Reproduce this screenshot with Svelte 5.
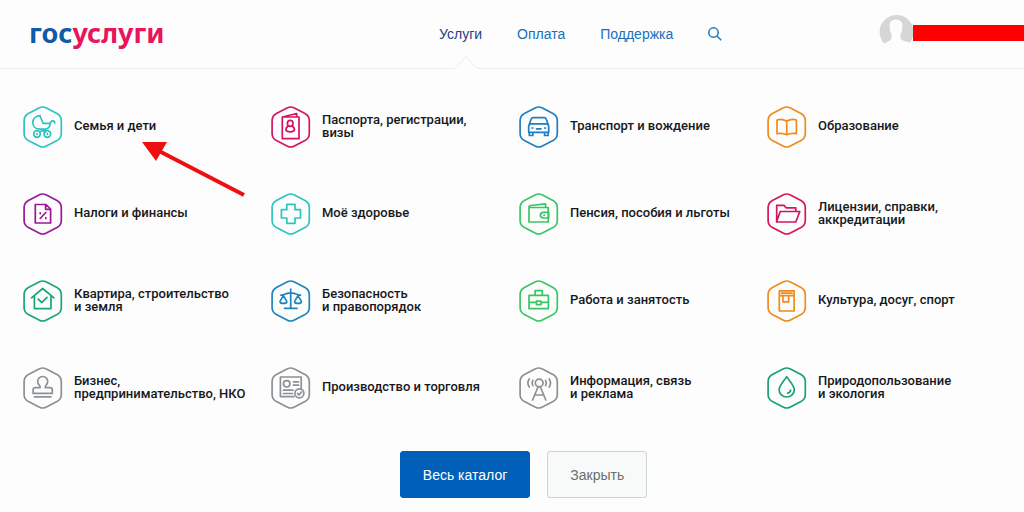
<script lang="ts">
  interface Category {
    title: string;
    icon: string;
    color: string;
  }

  // \u00a0 keeps the short "и" together with the word after it
  const categories: Category[] = [
    { title: 'Семья и дети', icon: 'stroller', color: '#2cc4c0' },
    { title: 'Паспорта, регистрации, визы', icon: 'passport', color: '#d3165c' },
    { title: 'Транспорт и вождение', icon: 'car', color: '#1f7fc0' },
    { title: 'Образование', icon: 'book', color: '#f08a1c' },
    { title: 'Налоги и финансы', icon: 'tax', color: '#9c1796' },
    { title: 'Моё здоровье', icon: 'cross', color: '#2cc4c0' },
    { title: 'Пенсия, пособия и льготы', icon: 'wallet', color: '#38c763' },
    { title: 'Лицензии, справки, аккредитации', icon: 'folder', color: '#d3165c' },
    { title: 'Квартира, строительство и\u00a0земля', icon: 'house', color: '#18a673' },
    { title: 'Безопасность и\u00a0правопорядок', icon: 'scales', color: '#1f84bd' },
    { title: 'Работа и занятость', icon: 'case', color: '#38c763' },
    { title: 'Культура, досуг, спорт', icon: 'notebook', color: '#f08a1c' },
    { title: 'Бизнес, предпринимательство, НКО', icon: 'stamp', color: '#8d9194' },
    { title: 'Производство и торговля', icon: 'certificate', color: '#8d9194' },
    { title: 'Информация, связь и\u00a0реклама', icon: 'antenna', color: '#8d9194' },
    { title: 'Природопользование и\u00a0экология', icon: 'drop', color: '#18a077' }
  ];

  const hexagon =
    'M16.5 1.8Q19.7 .2 22.9 1.8L34 7.4Q38.3 9.8 38.3 14.5V27.5Q38.3 32.2 34 34.6L22.9 40.2Q19.7 41.8 16.5 40.2L5.4 34.6Q1.1 32.2 1.1 27.5V14.5Q1.1 9.8 5.4 7.4Z';

  const icons: Record<string, string> = {
    stroller:
      'M17 9.7C12.5 10 9.8 13 9.8 16.5C9.8 20.5 12.5 23 16 23H23C26 22.4 27 20 27.3 17.5C27.6 15.3 29 14.6 30.3 14.9Q31.8 15.3 31.8 17M17 9.7L20 17.3H27.3M16.5 23L22.5 26M23 23L16.5 26M17.3 28a3.3 3.3 0 1 1-6.6 0a3.3 3.3 0 1 1 6.6 0M27.6 28a3.3 3.3 0 1 1-6.6 0a3.3 3.3 0 1 1 6.6 0M14 27.6v.8M24.3 27.6v.8',
    passport:
      'M11.3 11H28V32.7H11.3ZM11.3 11L25.7 7.5V11M22 17.4a2.8 3 0 1 1-5.6 0a2.8 3 0 1 1 5.6 0M17.2 20.3C15.5 21 14.8 22.5 15 24.5Q19.2 27.3 23.4 24.5C23.6 22.5 22.9 21 21.2 20.3',
    car: 'M10.4 18L12 13.5Q12.6 11.7 14.5 11.7H25Q26.8 11.7 27.4 13.5L29 18M9.7 20.5Q9.7 17.8 12 17.8H27.4Q29.7 17.8 29.7 20.5V26.3H9.7ZM10.3 26.3V29.5H13.8V26.3M25.6 26.3V29.5H29.1V26.3M13 22H13.8M25.6 22H26.4M17.5 22.8H22',
    book: 'M19.7 15.2Q15 12.5 10 14V27.7Q15 26.5 19.7 28.7Q24.4 26.5 29.4 27.7V14Q24.4 12.5 19.7 15.2ZM19.7 15.2V28.7',
    tax: 'M12.3 11.5H23L27.6 16V30H12.3ZM22.6 11.7V16.3H27.4M22.8 19.5L17.2 25.5M17.2 19.8v.8M22.8 24.6v.8',
    cross: 'M15.8 11.3H24V16.7H29.5V25H24V30.3H15.8V25H10.4V16.7H15.8Z',
    wallet:
      'M10 14.5H29.2V29H10ZM10 14.3Q9.8 12.8 11.5 12.5L26.6 10.9V14.3M29.7 19.3H24.5Q21.4 19.3 21.4 22.1Q21.4 25 24.5 25H29.7ZM25 22.1h.4',
    folder:
      'M9.7 28.5V12.4H17L19 14.8H28.8V18.3M9.5 29L13.2 18.5H32.8L28.8 29Z',
    house:
      'M8.5 17.8L19.7 8.5L31 17.8M11.4 16V28.6H28V16M15.3 19.2L18.7 22.6L24 17.4',
    scales:
      'M19.7 9.2V28.2M13.5 28.3H26M10 15.2Q12.5 15.2 15.5 13.6Q19.7 12 23.9 13.6Q26.9 15.2 29.4 15.2M12.4 15.6L9 21.4Q9 23.4 12.4 23.4Q15.8 23.4 15.8 21.4ZM27 15.6L23.6 21.4Q23.6 23.4 27 23.4Q30.4 23.4 30.4 21.4Z',
    case: 'M10 15.3H29.4V28.6H10ZM16.1 15.2V10.6H23.3V15.2M10 22.4H17.4M22 22.4H29.4M17.4 21.2H22V24.6H17.4Z',
    notebook:
      'M12.3 10.8H27.1V31H12.3ZM12.3 15.7H27.1M14.5 13.2H25M15.9 15.7V21.8H21.7V15.7',
    stamp:
      'M17.2 20.7C17.6 18.5 14.7 17.7 14.7 14.5A5 5 0 0 1 24.7 14.5C24.7 17.7 21.8 18.5 22.2 20.7H27Q29.3 20.7 29.3 23V26.4H10.1V23Q10.1 20.7 12.4 20.7ZM11.5 29.8H28',
    certificate:
      'M23 29.6H9.4V10H30.2V21M18.9 16.8a3.2 3.2 0 1 1-6.4 0a3.2 3.2 0 1 1 6.4 0M22.5 14.8H27.5M22.5 18.2H27.5M12.5 23.2H22M12.5 26.5H21.5M32.9 26.3a4.5 4.5 0 1 1-9 0a4.5 4.5 0 1 1 9 0M26.5 26.3L28 27.8L30.6 25',
    antenna:
      'M24.1 16a3.9 3.9 0 1 1-7.8 0a3.9 3.9 0 1 1 7.8 0M13.6 33L19 20H21.4L26.8 33M15.7 28H24.7M13.8 13.3Q12.3 16 13.8 18.7M10.2 12Q7.6 16 10.2 20M26.6 13.3Q28.1 16 26.6 18.7M30.2 12Q32.8 16 30.2 20',
    drop: 'M19.7 9.6C17 14 12.1 18.3 12.1 22.8A7.6 7.2 0 0 0 27.3 22.8C27.3 18.3 22.4 14 19.7 9.6ZM23.6 23Q23.3 25.6 20.8 26.2'
  };
</script>

<header class="header">
  <a class="logo" href="/"><span>гос</span>услуги</a>
  <nav class="nav">
    <a class="active" href="/services">
      Услуги
      <svg class="notch" width="28" height="14" viewBox="0 0 28 14" aria-hidden="true">
        <path d="M0 12.5H1Q3 12.5 4.5 11L14 1.5L23.5 11Q25 12.5 27 12.5H28V14H0Z" fill="#fdfdfd" />
        <path d="M0 13.5H1Q3 13.5 4.5 12L14 1.5L23.5 12Q25 13.5 27 13.5H28" fill="none" stroke="#ececee" />
      </svg>
    </a>
    <a href="/payment">Оплата</a>
    <a href="/support">Поддержка</a>
    <button class="search" type="button" aria-label="Поиск">
      <svg width="14" height="14" viewBox="0 0 14 14">
        <circle cx="5.5" cy="5.5" r="4.7" />
        <path d="M9 9L13.2 13.2" />
      </svg>
    </button>
  </nav>
  <div class="user">
    <svg width="34" height="40" viewBox="0 0 34 40" aria-hidden="true">
      <path
        d="M5 30.5A17 17 0 1 1 31 29.5L27 28.5Q21.5 27 21.5 24.5V21Q23.5 18 23.5 13Q23.5 6.5 17 6.5Q10.500 6.500 10.500 13Q10.500 18 12.500 21V24.500Q12.500 27 9 28.500Z"
        fill="#d6d6d6"
      />
    </svg>
    <span class="name"></span>
  </div>
</header>

<main class="catalog">
  <ul class="grid">
    {#each categories as category, i}
      <li>
        <a class="category" href="/category/{category.icon}">
          <svg class="icon" width="40" height="42" viewBox="0 0 40 42" style:color={category.color} aria-hidden="true">
            <path d={hexagon} />
            <path d={icons[category.icon]} />
          </svg>
          <span class="title">{category.title}</span>
        </a>
        {#if i === 0}
          <svg class="pointer" width="104" height="56" viewBox="0 0 104 56" aria-hidden="true">
            <path d="M17 9L102 53" stroke="#ee1010" stroke-width="4" />
            <path d="M0 0L25 0L14 19Z" fill="#ee1010" />
          </svg>
        {/if}
      </li>
    {/each}
  </ul>

  <div class="actions">
    <button class="primary" type="button">Весь каталог</button>
    <button class="secondary" type="button">Закрыть</button>
  </div>
</main>

<style>
  :global(body) {
    margin: 0;
    background: #fdfdfd;
    font-family: 'Liberation Sans', Arial, sans-serif;
  }

  a {
    text-decoration: none;
  }

  .header {
    display: grid;
    grid-template-columns: 410px 1fr auto;
    align-items: center;
    height: 68px;
    padding-left: 29px;
    border-bottom: 1px solid #ececee;
  }

  .logo {
    padding-bottom: 3px;
    color: #e8155b;
    font: 700 27px/40px 'Noto Sans', sans-serif;
  }

  .logo span {
    color: #0f5ba7;
  }

  .nav {
    display: flex;
    align-items: center;
    gap: 35px;
    font-size: 14px;
    line-height: 68px;
  }

  .nav a {
    position: relative;
    color: #1a6fb8;
  }

  .nav a.active {
    color: #1d3f7d;
  }

  .notch {
    position: absolute;
    left: 13px;
    bottom: -1px;
  }

  .search {
    display: flex;
    padding: 0;
    border: none;
    background: none;
    cursor: pointer;
  }

  .search svg {
    fill: none;
    stroke: #1f78b8;
    stroke-width: 1.5;
  }

  .user {
    display: flex;
    align-items: center;
    padding-bottom: 2px;
  }

  .name {
    width: 111px;
    height: 16px;
    background: #fe0000;
  }

  .catalog {
    padding: 37px 0 12px 23px;
  }

  .grid {
    display: grid;
    grid-template-columns: repeat(4, 1fr);
    row-gap: 45px;
    margin: 0;
    padding: 0 9px 0 0;
    list-style: none;
  }

  .grid li {
    position: relative;
  }

  .category {
    display: flex;
    align-items: center;
    gap: 11px;
    color: #16181c;
  }

  .icon {
    flex: none;
    fill: none;
    stroke: currentColor;
    stroke-width: 1.7;
    stroke-linejoin: round;
    stroke-linecap: round;
  }

  .title {
    max-width: 176px;
    padding-bottom: 3px;
    font: 500 13px/13px Roboto, 'Noto Sans', sans-serif;
  }

  .pointer {
    position: absolute;
    top: 36px;
    left: 119px;
  }

  .actions {
    display: flex;
    justify-content: center;
    gap: 17px;
    margin-top: 42px;
  }

  .actions button {
    height: 47px;
    padding: 0 22px;
    border: 1px solid #0060b9;
    border-radius: 3px;
    font: 14px 'Liberation Sans', Arial, sans-serif;
    cursor: pointer;
  }

  .actions .primary {
    background: #0060b9;
    color: #fff;
  }

  .actions .secondary {
    border-color: #cdd3d6;
    background: #f8fafa;
    color: #6b6e70;
  }
</style>
